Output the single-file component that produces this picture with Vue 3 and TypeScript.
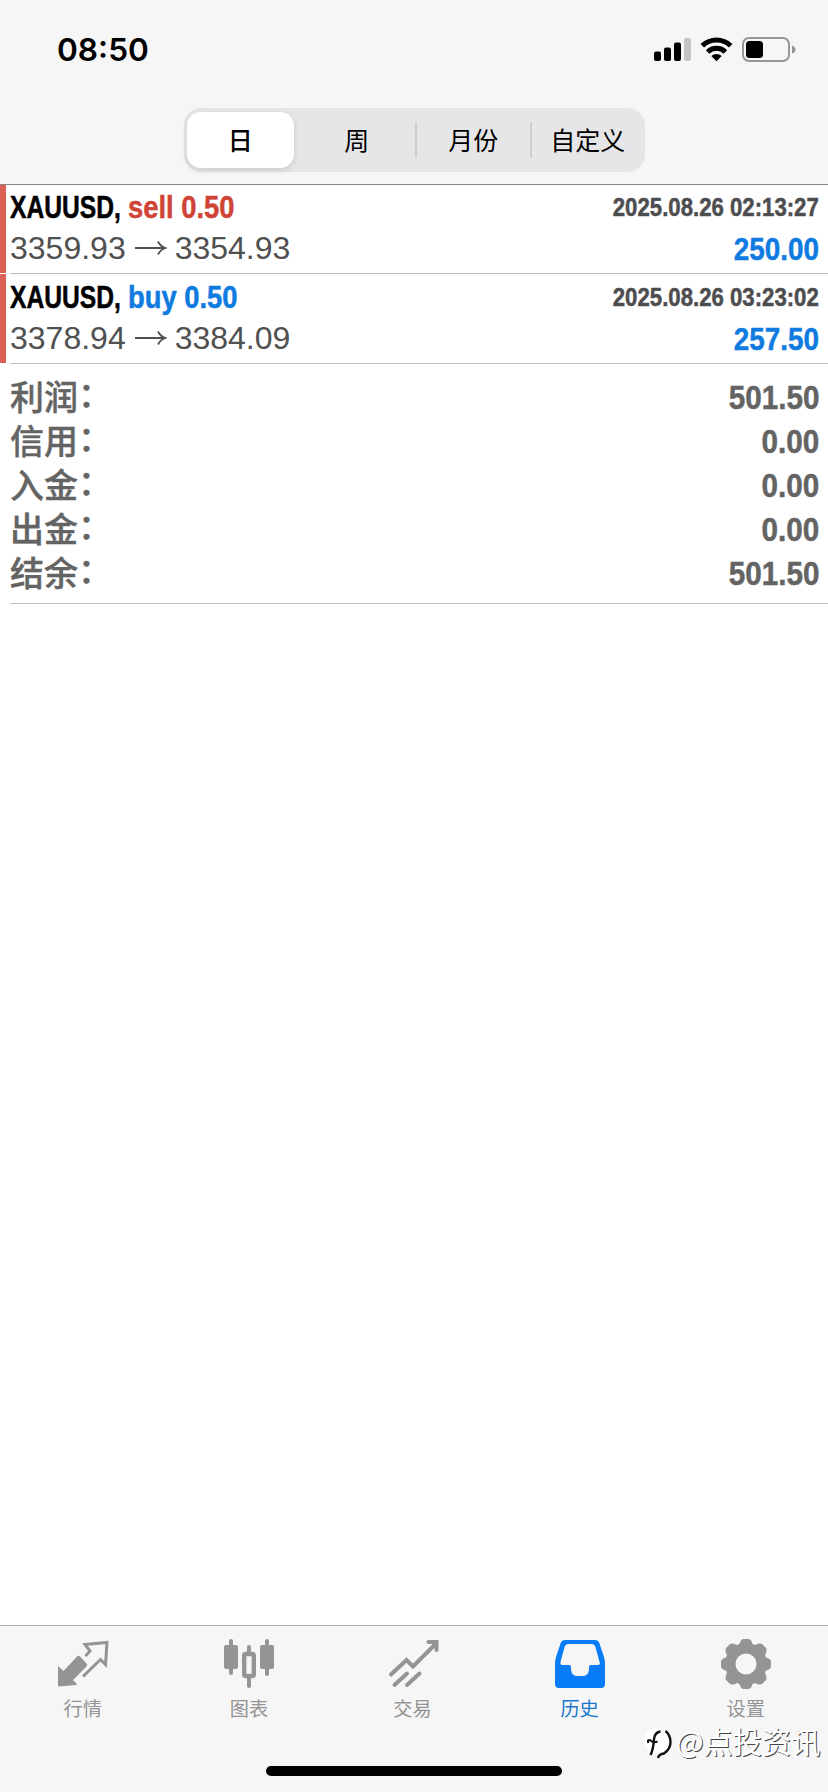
<script setup lang="ts">
interface Deal {
  symbol: string
  side: 'buy' | 'sell'
  volume: string
  open: string
  close: string
  time: string
  profit: string
}

const periods: string[] = ['日', '周', '月份', '自定义']

const deals: Deal[] = [
  { symbol: 'XAUUSD,', side: 'sell', volume: '0.50', open: '3359.93', close: '3354.93', time: '2025.08.26 02:13:27', profit: '250.00' },
  { symbol: 'XAUUSD,', side: 'buy', volume: '0.50', open: '3378.94', close: '3384.09', time: '2025.08.26 03:23:02', profit: '257.50' },
]

const totals: { label: string; value: string }[] = [
  { label: '利润', value: '501.50' },
  { label: '信用', value: '0.00' },
  { label: '入金', value: '0.00' },
  { label: '出金', value: '0.00' },
  { label: '结余', value: '501.50' },
]
</script>

<template>
  <div class="screen">
    <header class="top">
      <div class="status">
        <span class="clock">08:50</span>
        <svg class="indicators" width="144" height="30" viewBox="0 0 144 30">
          <rect x="1" y="16.5" width="7" height="9.5" rx="2" />
          <rect x="11" y="12.500" width="7" height="13.500" rx="2" />
          <rect x="21" y="7.500" width="7" height="18.500" rx="2" />
          <rect x="31" y="3" width="7" height="23" rx="2" fill="#c4c4c4" />
          <g fill="none" stroke="#000" stroke-width="5">
            <path d="M49.300 10.800a20.300 20.300 0 0 1 28.400 0" />
            <path d="M54.600 17a12.700 12.700 0 0 1 17.800 0" />
          </g>
          <path d="M63.500 26.200l-5.200-5.200a7.600 7.600 0 0 1 10.400 0z" />
          <rect x="90" y="3" width="46" height="23" rx="6" fill="none" stroke="#969696" stroke-width="2" />
          <rect x="93" y="6" width="17" height="17" rx="3.500" />
          <path d="M139 10.500q3.500 1 3.500 4t-3.500 4z" fill="#969696" />
        </svg>
      </div>
      <nav class="segments">
        <button v-for="(p, i) in periods" :key="p" class="segment" :class="{ active: i === 0, divided: i > 1 }">{{ p }}</button>
      </nav>
    </header>

    <main class="content">
      <section v-for="d in deals" :key="d.time" class="deal">
        <div class="line">
          <span class="title">
            <span class="symbol"><b class="cond">{{ d.symbol }}</b></span>
            <b class="cond order" :class="d.side">{{ d.side }} {{ d.volume }}</b>
          </span>
          <b class="cond time">{{ d.time }}</b>
        </div>
        <div class="line">
          <span class="prices">
            <span>{{ d.open }}</span>
            <svg class="arrow" width="32" height="16" viewBox="0 0 32 16">
              <path d="M0 8H30M23 1.500Q25.500 6.500 30.500 8Q25.500 9.500 23 14.500" fill="none" stroke="#505050" stroke-width="1.800" />
            </svg>
            <span>{{ d.close }}</span>
          </span>
          <b class="cond profit">{{ d.profit }}</b>
        </div>
      </section>

      <section class="totals">
        <div v-for="t in totals" :key="t.label" class="total">
          <span class="label">{{ t.label }}<span class="colon">：</span></span>
          <b class="cond amount">{{ t.value }}</b>
        </div>
      </section>
    </main>

    <footer class="tabs">
      <div class="tab">
        <svg width="52" height="52" viewBox="0 0 52 52">
          <path d="M1 28L6.500 33L20 18.500Q21.500 17 23 18.500L29.500 25.500Q31 27 29.500 28.500L16 42L20 46Q20 47 18.500 47L2.500 48.500Q1 48.500 1 47z" fill="#949494" />
          <path d="M28.500 18L33 13L28 6.500L50 4.500L48.500 26.500L43.500 21.500L26 38.500" fill="none" stroke="#949494" stroke-width="3" />
        </svg>
        <span>行情</span>
      </div>
      <div class="tab chart">
        <svg width="52" height="52" viewBox="0 0 52 52" fill="#949494">
          <rect x="1" y="7" width="14" height="24" rx="2" />
          <rect x="6" y="1" width="4" height="36" rx="2" />
          <rect x="37" y="7" width="14" height="24" rx="2" />
          <rect x="42" y="1" width="4" height="37" rx="2" />
          <rect x="24" y="7" width="4" height="9" rx="2" />
          <rect x="24" y="38" width="4" height="12" rx="2" />
          <rect x="21.200" y="16" width="9.600" height="22" rx="1.500" fill="none" stroke="#949494" stroke-width="4.400" />
        </svg>
        <span>图表</span>
      </div>
      <div class="tab trade">
        <svg width="52" height="52" viewBox="0 0 52 52" fill="none" stroke="#949494" stroke-width="4" stroke-linecap="round">
          <path d="M3 36.500L18.500 22L25 28.500L47.500 6" />
          <path d="M6.500 47L19 35.500M19 47L31.500 35.500" />
          <path d="M40.500 4H48.500V12" />
        </svg>
        <span>交易</span>
      </div>
      <div class="tab current">
        <svg width="52" height="52" viewBox="0 0 52 52">
          <path fill-rule="evenodd" fill="#087df7" d="M11 2H41Q44 2 45.300 5L50 19Q51 22 51 27V46Q51 50 47 50H5Q1 50 1 46V27Q1 22 2 19L6.700 5Q8 2 11 2zM14 6Q11.500 6 10.700 8.500L6.500 24Q6 27 8 27H15.500Q17 27 17 30Q17 38 23 38H29Q35 38 35 30Q35 27 36.500 27H44Q46.300 27 45.700 24.500L41.300 8.500Q40.500 6 38 6z" />
        </svg>
        <span>历史</span>
      </div>
      <div class="tab settings">
        <svg width="52" height="52" viewBox="0 0 52 52">
          <path fill-rule="evenodd" fill="#949494" d="M23.500 1H28.500Q31.500 1.500 32.500 6L35 7Q39 4.500 42 6L46 10Q47.500 13 45 17L46 19.500Q50.500 20.500 51 23.500V28.500Q50.500 31.500 46 32.500L45 35Q47.500 39 46 42L42 46Q39 47.500 35 45L32.500 46Q31.500 50.500 28.500 51H23.500Q20.500 50.500 19.500 46L17 45Q13 47.500 10 46L6 42Q4.500 39 7 35L6 32.500Q1.500 31.500 1 28.500V23.500Q1.500 20.500 6 19.500L7 17Q4.500 13 6 10L10 6Q13 4.500 17 7L19.500 6Q20.500 1.500 23.500 1zM26 15.500A10.500 10.500 0 1 0 26 36.500A10.500 10.500 0 1 0 26 15.500z" />
        </svg>
        <span>设置</span>
      </div>
      <div class="home"></div>
      <div class="mark">
        <svg width="30" height="32" viewBox="0 0 30 32">
          <circle cx="14" cy="13" r="13" fill="#fff" />
          <path d="M17.500 3.500C13.500 4 11.500 7 11 11C10.500 17 10.500 21 7.500 27" fill="none" stroke="#111" stroke-width="2.400" />
          <path d="M5 15V12.500Q7 11.500 8 13Q11 15 14.500 13.500" fill="none" stroke="#111" stroke-width="2" />
          <path d="M22.500 3Q27.500 7 27.500 14T21 25.500Q16 26 15 30" fill="none" stroke="#111" stroke-width="2.400" />
        </svg>
        <span>@点投资讯</span>
      </div>
    </footer>
  </div>
</template>

<style>
body {
  margin: 0;
}
</style>

<style scoped>
.screen {
  display: flex;
  flex-direction: column;
  width: 828px;
  height: 1792px;
  background: #fff;
  font-family: "Liberation Sans", "Noto Sans CJK SC", sans-serif;
  overflow: hidden;
}
.top {
  box-sizing: border-box;
  height: 185px;
  background: #f6f6f6;
  border-bottom: 1px solid #888;
}
.status {
  display: flex;
  justify-content: space-between;
  align-items: center;
  height: 100px;
  padding: 0 31px 0 57px;
}
.clock {
  font: 600 31.6px/40px Inter, sans-serif;
  color: #000;
}
.segments {
  display: grid;
  grid-template-columns: repeat(4, 1fr);
  box-sizing: border-box;
  width: 461px;
  height: 64px;
  margin: 8px 0 0 184px;
  padding: 4px 0 4px 3px;
  border-radius: 17px;
  background: #e6e6e8;
}
.segment {
  position: relative;
  border: 0;
  padding: 0 0 2px;
  background: none;
  color: #000;
  font: 400 25px/54px "Noto Sans CJK SC", sans-serif;
}
.segment:nth-child(2) {
  padding-right: 4px;
}
.segment.active {
  margin-right: 8px;
  border-radius: 14px;
  background: #fff;
  box-shadow: 0 2px 6px rgba(0, 0, 0, 0.12);
  font-weight: 500;
}
.segment.divided::before {
  content: "";
  position: absolute;
  left: -1px;
  top: 10px;
  width: 2px;
  height: 36px;
  background: #cfcfd2;
}
.cond {
  display: inline-block;
  font-weight: 700;
  white-space: nowrap;
  transform-origin: 0 50%;
  -webkit-text-stroke: 0.5px currentColor;
}
.deal {
  position: relative;
  box-sizing: border-box;
  height: 89px;
  padding: 2px 10px 0 10px;
}
.deal + .deal {
  height: 90px;
  padding-top: 3px;
}
.deal::before {
  content: "";
  position: absolute;
  left: 0;
  top: 0;
  bottom: 1px;
  width: 6px;
  background: #dc6054;
}
.deal::after {
  content: "";
  position: absolute;
  left: 10px;
  right: 0;
  bottom: 0;
  height: 1px;
  background: #bcbcbc;
}
.line {
  display: flex;
  justify-content: space-between;
  align-items: center;
  height: 41px;
}
.title,
.prices {
  display: flex;
  align-items: center;
}
.symbol {
  width: 118px;
  font-size: 32px;
}
.symbol .cond {
  transform: scaleX(0.77);
}
.order {
  font-size: 32px;
  transform: scaleX(0.855);
}
.sell {
  color: #cf4436;
}
.buy {
  color: #0f7be0;
}
.time {
  font-size: 25.5px;
  color: #4d4d50;
  transform: translateX(1px) scaleX(0.87);
  transform-origin: 100% 50%;
}
.profit {
  font-size: 32px;
  color: #0f7be0;
  transform: translate(1px, 1px) scaleX(0.87);
  transform-origin: 100% 50%;
}
.prices {
  font-size: 32px;
  color: #505050;
}
.arrow {
  margin: 0 8px 0 9px;
  transform: translateY(-1px);
}
.totals {
  position: relative;
  box-sizing: border-box;
  height: 240px;
  padding: 10px 10px 0;
}
.totals::after {
  content: "";
  position: absolute;
  left: 10px;
  right: 0;
  bottom: 0;
  height: 1px;
  background: #bcbcbc;
}
.total {
  display: flex;
  justify-content: space-between;
  align-items: center;
  height: 44px;
  color: #646464;
}
.label {
  display: flex;
  font: 500 34px/44px "Noto Sans CJK SC", sans-serif;
  -webkit-text-stroke: 0.4px currentColor;
}
.colon {
  transform: translateY(-3px);
}
.amount {
  font-size: 33.5px;
  transform: translate(1px, 2px) scaleX(0.885);
  transform-origin: 100% 50%;
}
.content {
  flex: 1;
}
.tabs {
  position: relative;
  display: grid;
  grid-template-columns: repeat(5, 1fr);
  box-sizing: border-box;
  height: 167px;
  border-top: 1px solid #acacac;
  background: #f6f6f6;
}
.tab {
  display: flex;
  flex-direction: column;
  align-items: center;
  padding-top: 12px;
  color: #949494;
  font: 400 19.2px/30px "Noto Sans CJK SC", sans-serif;
}
.tab.chart,
.tab.settings {
  padding-left: 1px;
}
.tab span {
  margin-top: 3px;
}
.tab.trade span {
  margin-right: 3px;
}
.tab.current {
  color: #1a76cc;
}
.home {
  position: absolute;
  left: 266px;
  bottom: 16px;
  width: 296px;
  height: 10px;
  border-radius: 5px;
  background: #000;
}
.mark {
  position: absolute;
  left: 643px;
  bottom: 30px;
  display: flex;
  align-items: center;
  color: #fff;
  font: 400 29.200px/40px "Noto Sans CJK SC", sans-serif;
  text-shadow: 1px 1px 0 #444;
}
.mark svg {
  transform: translateY(2px);
}
.mark span {
  margin-left: 3px;
  white-space: nowrap;
  transform: translateY(-2px);
}
</style>
